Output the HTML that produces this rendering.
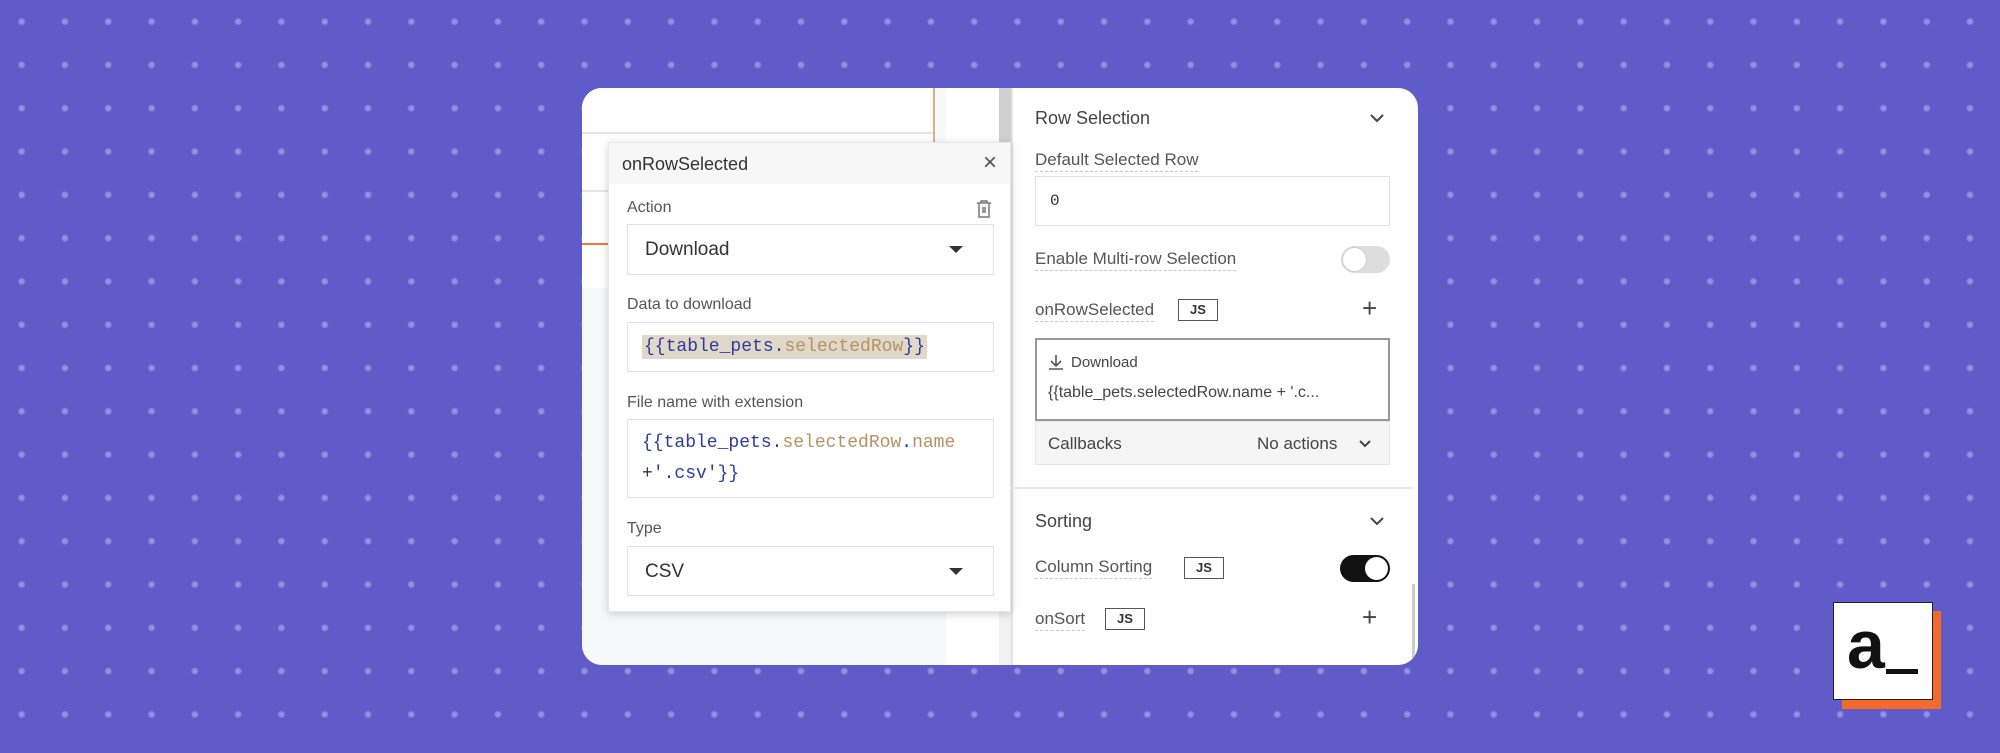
<!DOCTYPE html>
<html><head><meta charset="utf-8"><style>
*{margin:0;padding:0;box-sizing:border-box}
body{width:2000px;height:753px;overflow:hidden;background:#5f5bc8;background-image:radial-gradient(circle at 21.65px 21.65px,#9a97e6 0,#8e8ade 2.5px,rgba(95,91,200,0) 4px);background-size:43.3px 43.3px;font-family:"Liberation Sans",sans-serif;position:relative;color:#4b4b4b}
.a{position:absolute}
.card{left:582px;top:88px;width:836px;height:577px;background:#fff;border-radius:20px;overflow:hidden}
.mono{font-family:"Liberation Mono",monospace}
.lbl{font-size:16px;color:#555}
.box{border:1.5px solid #e2e2e2;background:#fff}
.tri{width:0;height:0;border-left:7px solid transparent;border-right:7px solid transparent;border-top:7px solid #333}
.dot{border-bottom:1.5px dashed #c8c8c8;padding-bottom:1px}
.js{border:1.5px solid #555;font-size:13px;font-weight:bold;color:#333;text-align:center;line-height:19px;height:22px}
.b{color:#2e3a9c}.o{color:#b79262}
</style></head><body>
<div class="a card">
  <div class="a" style="left:0;top:0;width:364px;height:577px;background:#f7f8fa"></div>
  <div class="a" style="left:0;top:0;width:351px;height:200px;background:#fff"></div>
  <div class="a" style="left:0;top:44px;width:351px;height:1.5px;background:#e6e6e6"></div>
  <div class="a" style="left:0;top:102px;width:351px;height:1.5px;background:#e6e6e6"></div>
  <div class="a" style="left:0;top:155px;width:30px;height:2px;background:#f07a3a"></div>
  <div class="a" style="left:351px;top:0;width:2px;height:56px;background:#d6b08a"></div>
  <div class="a" style="left:364px;top:0;width:53px;height:577px;background:#fff"></div>
  <div class="a" style="left:417px;top:0;width:12px;height:577px;background:#f1f1f1"></div>
  <div class="a" style="left:417px;top:0;width:12px;height:54px;background:#cfcfcf"></div>
  <div class="a" style="left:429px;top:0;width:1.5px;height:577px;background:#e4e4e4"></div>
  <!-- popup -->
  <div class="a" style="left:26px;top:54px;width:403px;height:470px;background:#fff;box-shadow:0 2px 8px rgba(0,0,0,.18);border:1px solid #e8e8e8">
    <div class="a" style="left:0;top:0;width:401px;height:41px;background:#f7f7f7"></div>
    <div class="a" style="left:13px;top:11px;font-size:18px;color:#333">onRowSelected</div>
    <div class="a" style="left:374px;top:6px;font-size:24px;color:#555">×</div>
    <div class="a lbl" style="left:18px;top:56px">Action</div>
    <svg class="a" style="left:366px;top:56px" width="18" height="20" viewBox="0 0 18 20"><path d="M2 4h14M6 4V2h6v2M4 4v14h10V4M8 8v6M10 8v6" fill="none" stroke="#777" stroke-width="1.5"/></svg>
    <div class="a box" style="left:18px;top:81px;width:367px;height:51px"><div class="a" style="left:17px;top:14px;font-size:19px;color:#333">Download</div><div class="a tri" style="left:321px;top:21px"></div></div>
    <div class="a lbl" style="left:18px;top:153px">Data to download</div>
    <div class="a box" style="left:18px;top:179px;width:367px;height:50px"><div class="a mono" style="left:14px;top:12px;font-size:18px;background:#e0d8c8;padding:2px 2px"><span class="b">{{table_pets.</span><span class="o">selectedRow</span><span class="b">}}</span></div></div>
    <div class="a lbl" style="left:18px;top:251px">File name with extension</div>
    <div class="a box" style="left:18px;top:276px;width:367px;height:79px"><div class="a mono" style="left:14px;top:8px;font-size:18px;line-height:31px;white-space:nowrap"><span class="b">{{table_pets.</span><span class="o">selectedRow</span><span class="b">.</span><span class="o">name</span><br><span style="color:#333">+</span><span class="b">'.csv'}}</span></div></div>
    <div class="a lbl" style="left:18px;top:377px">Type</div>
    <div class="a box" style="left:18px;top:403px;width:367px;height:50px"><div class="a" style="left:17px;top:14px;font-size:19px;color:#333">CSV</div><div class="a tri" style="left:321px;top:21px"></div></div>
  </div>
  <!-- right panel -->
  <div class="a" style="left:453px;top:20px;font-size:18px;color:#444">Row Selection</div>
  <svg class="a" style="left:787px;top:25px" width="16" height="10"><path d="M2 2l6 6 6-6" fill="none" stroke="#444" stroke-width="2"/></svg>
  <div class="a dot" style="left:453px;top:62px;font-size:17px;color:#555">Default Selected Row</div>
  <div class="a box" style="left:453px;top:88px;width:355px;height:50px"><div class="a mono" style="left:14px;top:15px;font-size:16px;color:#333">0</div></div>
  <div class="a dot" style="left:453px;top:161px;font-size:17px;color:#555">Enable Multi-row Selection</div>
  <div class="a" style="left:759px;top:158px;width:49px;height:27px;border-radius:14px;background:#ddd"><div class="a" style="left:1px;top:1px;width:25px;height:25px;border-radius:50%;background:#fff;border:1px solid #ccc"></div></div>
  <div class="a dot" style="left:453px;top:212px;font-size:17px;color:#555">onRowSelected</div>
  <div class="a js" style="left:596px;top:211px;width:40px">JS</div>
  <div class="a" style="left:780px;top:205px;font-size:26px;color:#444">+</div>
  <div class="a" style="left:453px;top:250px;width:355px;height:83px;border:2px solid #999"></div>
  <svg class="a" style="left:466px;top:266px" width="16" height="16"><path d="M8 1v10M3 7l5 5 5-5M1 15h14" fill="none" stroke="#555" stroke-width="1.6"/></svg>
  <div class="a" style="left:489px;top:266px;font-size:15px;color:#444">Download</div>
  <div class="a" style="left:466px;top:296px;font-size:16px;color:#444">{{table_pets.selectedRow.name + '.c...</div>
  <div class="a" style="left:453px;top:333px;width:355px;height:44px;background:#f5f5f5;border:1px solid #e6e6e6"></div>
  <div class="a" style="left:466px;top:346px;font-size:17px;color:#444">Callbacks</div>
  <div class="a" style="left:675px;top:346px;font-size:17px;color:#444">No actions</div>
  <svg class="a" style="left:777px;top:352px" width="12" height="8"><path d="M1 1l5 5 5-5" fill="none" stroke="#444" stroke-width="2"/></svg>
  <div class="a" style="left:430px;top:399px;width:401px;height:1.5px;background:#e8e8e8"></div>
  <div class="a" style="left:453px;top:423px;font-size:18px;color:#444">Sorting</div>
  <svg class="a" style="left:787px;top:428px" width="16" height="10"><path d="M2 2l6 6 6-6" fill="none" stroke="#444" stroke-width="2"/></svg>
  <div class="a dot" style="left:453px;top:469px;font-size:17px;color:#555">Column Sorting</div>
  <div class="a js" style="left:602px;top:469px;width:40px">JS</div>
  <div class="a" style="left:758px;top:467px;width:50px;height:27px;border-radius:14px;background:#111"><div class="a" style="left:25px;top:2px;width:23px;height:23px;border-radius:50%;background:#fff"></div></div>
  <div class="a dot" style="left:453px;top:521px;font-size:17px;color:#555">onSort</div>
  <div class="a js" style="left:523px;top:520px;width:40px">JS</div>
  <div class="a" style="left:780px;top:514px;font-size:26px;color:#444">+</div>
  <div class="a" style="left:830px;top:496px;width:3px;height:81px;background:#ccc"></div>
</div>
<!-- logo -->
<div class="a" style="left:1842px;top:611px;width:99px;height:98px;background:#f46a2c"></div>
<div class="a" style="left:1833px;top:602px;width:100px;height:98px;background:#fff;border:1px solid #222">
  <div class="a" style="left:13px;top:2px;font-size:68px;font-weight:bold;color:#111;line-height:80px">a</div>
  <div class="a" style="left:52px;top:66px;width:32px;height:5px;background:#111"></div>
</div>
</body></html>
